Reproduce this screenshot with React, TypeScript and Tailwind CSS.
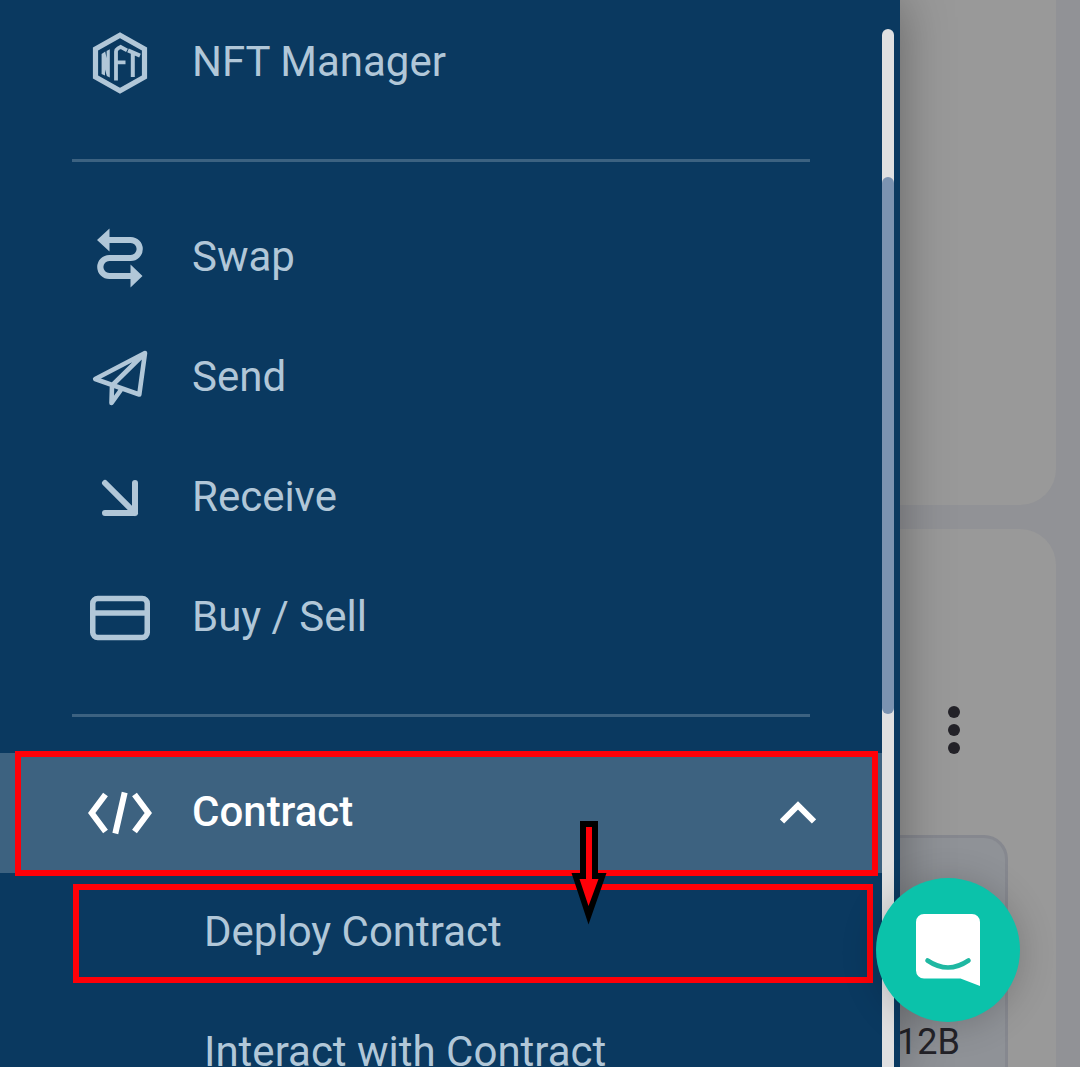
import type { ReactNode } from "react";

function NftIcon() {
  return (
    <svg viewBox="0 0 60 64" className="h-16 w-[60px]" fill="none" stroke="currentColor" aria-hidden="true">
      <path d="M30 4.200 54.500 18v28L30 59.800 5.500 46V18Z" strokeWidth="5.200" />
      <path d="M11.600 23 15.200 20.500 16.600 27V20L19.800 18.300V46.500L16.800 45 15 38.500V44.500L11.600 43Z" fill="currentColor" stroke="none" />
      <path d="M26 49.500V20.500q0-2 2-3.200l2.600-1.400 6.400 3.500M26.500 31.400H35.500" strokeWidth="3.800" />
      <path d="m38 19.400 12 5.200M42.800 21.500v24.500" strokeWidth="4" />
    </svg>
  );
}

function SwapIcon() {
  return (
    <svg viewBox="0 0 60 64" className="h-16 w-[60px]" fill="none" stroke="currentColor" aria-hidden="true">
      <path d="M17 14h23.700a9 9 0 0 1 0 18H19.300a9 9 0 0 0 0 18H42" strokeWidth="6.200" />
      <path d="M7 14 19.500 2.500v23ZM52.500 50 40.500 38.500v23Z" fill="currentColor" stroke="none" />
    </svg>
  );
}

function SendIcon() {
  return (
    <svg viewBox="0 0 60 64" className="h-16 w-[60px]" fill="none" stroke="currentColor" strokeLinejoin="round" strokeLinecap="round" strokeWidth="4.600" aria-hidden="true">
      <path d="M55 7 5.200 33 49.300 48.500ZM54 8 22 39.500 21.500 57l9-12.500" />
    </svg>
  );
}

function ReceiveIcon() {
  return (
    <svg viewBox="0 0 60 64" className="h-16 w-[60px]" fill="none" stroke="currentColor" strokeLinecap="round" strokeLinejoin="round" strokeWidth="6" aria-hidden="true">
      <path d="m15 17 30 30M45 17v30H15" />
    </svg>
  );
}

function CardIcon() {
  return (
    <svg viewBox="0 0 60 64" className="h-16 w-[60px]" fill="none" stroke="currentColor" strokeWidth="5.500" aria-hidden="true">
      <rect x="2.750" y="12.400" width="54.500" height="39" rx="5" />
      <path d="M3 27h54" />
    </svg>
  );
}

function CodeIcon() {
  return (
    <svg viewBox="0 0 64 64" className="-mx-[2px] h-16 w-16" fill="none" stroke="currentColor" strokeWidth="6" aria-hidden="true">
      <path d="M17.500 13.500 3.700 32l13.800 18.500M46.500 13.500 60.300 32 46.500 50.500M36.700 11.500 27.300 52.500" />
    </svg>
  );
}

function NavItem({ icon, label }: { icon: ReactNode; label: string }) {
  return (
    <li>
      <a href="#" className="flex h-[120px] items-center gap-[42px] pl-[90px]">
        {icon}
        <span className="-mt-0.5">{label}</span>
      </a>
    </li>
  );
}

function Divider() {
  return <li role="separator" className="mx-[72px] my-9 h-[3px] bg-[#3c6281]" />;
}

function Sidebar() {
  return (
    <aside className="relative z-10 flex w-5/6 shrink-0 bg-[#0a3960] shadow-[0_0_48px_rgba(0,0,0,0.35)]">
      <nav className="min-w-0 flex-1 pt-[3px] text-[42px] leading-[48px] text-[#b1c7d8]">
        <ul>
          <NavItem icon={<NftIcon />} label="NFT Manager" />
          <Divider />
          <NavItem icon={<SwapIcon />} label="Swap" />
          <NavItem icon={<SendIcon />} label="Send" />
          <NavItem icon={<ReceiveIcon />} label="Receive" />
          <NavItem icon={<CardIcon />} label="Buy / Sell" />
          <Divider />
          <li>
            <div className="relative z-10">
              <button
                type="button"
                aria-expanded="true"
                className="flex h-[120px] w-full items-center gap-[42px] bg-[#3d6280] pr-[66px] pl-[90px] text-left font-medium text-white"
              >
                <CodeIcon />
                <span className="-mt-0.5 flex-1">Contract</span>
                <svg viewBox="0 0 36 24" className="h-6 w-9" fill="none" stroke="currentColor" strokeWidth="6" aria-hidden="true">
                  <path d="M2 20.500 18 4.500l16 16" />
                </svg>
              </button>
              <div className="pointer-events-none absolute -top-[2px] right-1 -bottom-[3px] left-[15px] border-6 border-[#ff0008]" />
              <svg viewBox="0 0 36 104" className="pointer-events-none absolute top-[68px] left-[571px] h-[104px] w-9" aria-hidden="true">
                <path d="M9 0h18v52h8.500L17.500 103.500 0.500 52H9Z" fill="#000" />
                <path d="M15 6h6v52h6.500L17.500 85 8.500 58H15Z" fill="#ff0008" />
              </svg>
            </div>
            <ul>
              <li className="relative">
                <a href="#" className="flex h-[120px] items-center pl-[204px]">
                  <span className="-mt-0.5">Deploy Contract</span>
                </a>
                <div className="pointer-events-none absolute top-[11px] right-[9px] bottom-[10px] left-[73px] border-6 border-[#ff0008]" />
              </li>
              <li>
                <a href="#" className="flex h-[120px] items-center pl-[204px]">
                  <span className="-mt-0.5">Interact with Contract</span>
                </a>
              </li>
            </ul>
          </li>
        </ul>
      </nav>
      <div className="mt-[29px] mr-[6px] w-3 rounded-t-full bg-[#e0e0e1] pt-[148px]">
        <div className="h-[537px] rounded-full bg-[#7b93b1]" />
      </div>
    </aside>
  );
}

function Dashboard() {
  return (
    <main className="flex min-w-0 flex-1 flex-col gap-6 bg-[#919296] pr-6">
      <section className="h-[505px] shrink-0 rounded-br-[36px] bg-[#999999]" />
      <section className="flex flex-1 flex-col rounded-tr-[36px] bg-[#999999] pt-[177px]">
        <button type="button" aria-label="More options" className="mr-24 flex flex-col gap-[6px] self-end text-[#242329]">
          <span className="size-3 rounded-full bg-current" />
          <span className="size-3 rounded-full bg-current" />
          <span className="size-3 rounded-full bg-current" />
        </button>
        <div className="mt-[81px] mr-12 flex-1 rounded-tr-3xl border-t-3 border-r-3 border-[#86888f] bg-[#8f9297] pt-[183px] pr-[45px]">
          <p className="flex justify-end text-[36px] leading-[42px] text-[#242329]">12B</p>
        </div>
      </section>
    </main>
  );
}

export default function App() {
  return (
    <div className="relative flex h-screen overflow-hidden font-['Roboto',sans-serif]">
      <Sidebar />
      <Dashboard />
      <button
        type="button"
        aria-label="Open chat"
        className="absolute right-[60px] bottom-[45px] z-20 flex size-36 items-center justify-center rounded-full bg-[#0bc2aa] shadow-[0_3px_36px_rgba(0,0,0,0.2)]"
      >
        <svg viewBox="0 0 64 72" className="h-[72px] w-16" fill="none" aria-hidden="true">
          <path d="M8 0h48a8 8 0 0 1 8 8v64L44.500 64.500H8a8 8 0 0 1-8-8V8a8 8 0 0 1 8-8Z" fill="#fff" />
          <path d="M11.500 46.500q20.500 14 41 0" stroke="#1fb8a2" strokeWidth="4.600" strokeLinecap="round" />
        </svg>
      </button>
    </div>
  );
}
